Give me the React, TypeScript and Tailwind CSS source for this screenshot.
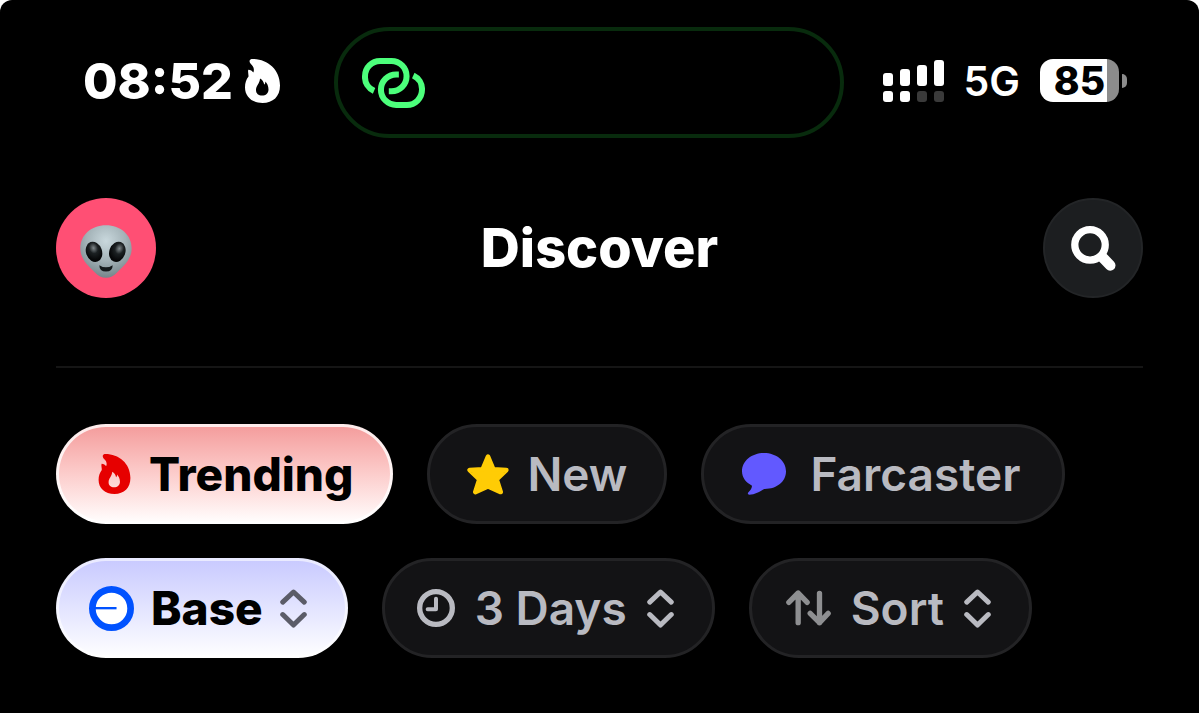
import React from "react";

const BARS = [
  { height: "h-[13px]", foot: "bg-white" },
  { height: "h-[17px]", foot: "bg-white" },
  { height: "h-[21px]", foot: "bg-[#3a3a3a]" },
  { height: "h-[26px]", foot: "bg-[#3a3a3a]" },
];

function FlameIcon({ className }: { className: string }) {
  return (
    <svg viewBox="0 0 35 44" className={className} fill="currentColor" aria-hidden="true">
      <path
        fillRule="evenodd"
        d="M7.5 0C22 0 35 10 35 26.500C35 37.500 28 44 17.500 44C7 44 0 37.500 0 28.500C0 24 1.200 20.500 3.500 17.500C3.700 15.500 2.600 13 3.300 10.800C5.500 10.800 7.400 12 8.200 13.600C9.400 11.500 9 8.500 7.200 6.500C5.500 4.800 4.300 3.500 4.600 1.800C4.800.600 6 0 7.500 0ZM15 19.500C14.800 24.500 11 26.500 11 31C11 34.600 13.600 36.600 17 36.600C20.800 36.600 23.500 34.300 23.500 30.500C23.500 27 22 24.300 20.300 22.500C20.400 24 20 25 19.200 25.600C18.800 23 17.300 20.600 15 19.500Z"
      />
    </svg>
  );
}

function LinkIcon() {
  return (
    <svg
      viewBox="0 0 188 149"
      className="h-[50px] w-[63px] text-[#4cff7b]"
      fill="none"
      stroke="currentColor"
      strokeWidth="18"
      aria-hidden="true"
    >
      <path d="M36 98A45 45 0 0 1 9 54A45 45 0 0 1 54 9H88A45 45 0 0 1 88 99H80" />
      <path d="M110 49H102A45 45 0 0 0 102 140H134A45 45 0 0 0 179 95A45 45 0 0 0 153 52" />
    </svg>
  );
}

function AlienIcon() {
  return (
    <svg viewBox="0 0 156 158" className="mt-[6px] h-[53px] w-[52px]" aria-hidden="true">
      <defs>
        <radialGradient id="skin" cx="0.5" cy="0.3" r="0.7">
          <stop offset="0" stopColor="#c9d8dd" />
          <stop offset="0.55" stopColor="#a3b2b7" />
          <stop offset="1" stopColor="#75858a" />
        </radialGradient>
        <radialGradient id="eye" cx="0.55" cy="0.32" r="0.6">
          <stop offset="0" stopColor="#80888b" />
          <stop offset="0.45" stopColor="#1b2022" />
          <stop offset="1" stopColor="#050607" />
        </radialGradient>
      </defs>
      <path
        fill="url(#skin)"
        d="M78 0C122 0 155 29 155 70C155 100 134 120 112 141C101 153 91 158 78 158C65 158 55 153 44 141C22 120 1 100 1 70C1 29 34 0 78 0Z"
      />
      <ellipse cx="42" cy="80" rx="24" ry="31" transform="rotate(-20 42 80)" fill="url(#eye)" />
      <ellipse cx="112" cy="80" rx="24" ry="31" transform="rotate(20 112 80)" fill="url(#eye)" />
      <path d="M58 120Q78 133 98 120Q98 139 78 139Q58 139 58 120Z" fill="#14191b" />
    </svg>
  );
}

function SearchIcon() {
  return (
    <svg viewBox="0 0 135 136" className="h-[45px] w-[45px]" fill="none" stroke="white" aria-hidden="true">
      <circle cx="57" cy="57" r="46" strokeWidth="22" />
      <path d="M94 94L118 119" strokeWidth="32" strokeLinecap="round" />
    </svg>
  );
}

function StarIcon() {
  return (
    <svg viewBox="0 0 126 123" className="h-[41px] w-[42px]" aria-hidden="true">
      <path
        d="M63 8L79 46L118 48L89 76L101 114L63 97L25 114L37 76L8 48L47 46Z"
        fill="#ffcc05"
        stroke="#ffcc05"
        strokeWidth="14"
        strokeLinejoin="round"
      />
    </svg>
  );
}

function BubbleIcon() {
  return (
    <svg viewBox="0 0 132 126" className="h-[42px] w-[44px]" fill="#6259ff" aria-hidden="true">
      <path d="M66 0C103 0 132 24 132 55C132 87 103 109 66 108C54 116 38 125 22 125C17 125 16 121 20 117C26 111 30 104 30 98C12 89 0 74 0 55C0 24 29 0 66 0Z" />
    </svg>
  );
}

function BaseIcon() {
  return (
    <svg viewBox="0 0 134 134" className="h-[45px] w-[45px]" aria-hidden="true">
      <circle cx="67" cy="67" r="57" fill="white" stroke="#0052ff" strokeWidth="20" />
      <path d="M15 66H82" stroke="#0052ff" strokeWidth="7" />
    </svg>
  );
}

function ClockIcon() {
  return (
    <svg
      viewBox="0 0 114 114"
      className="h-[38px] w-[38px]"
      fill="none"
      stroke="currentColor"
      strokeLinecap="round"
      strokeLinejoin="round"
      aria-hidden="true"
    >
      <circle cx="57" cy="57" r="49" strokeWidth="16" />
      <path d="M57 29V61H32" strokeWidth="12" />
    </svg>
  );
}

function SortIcon() {
  return (
    <svg
      viewBox="0 0 134 108"
      className="h-[36px] w-[45px] text-[#8e8f91]"
      fill="none"
      stroke="currentColor"
      strokeWidth="16"
      strokeLinecap="round"
      strokeLinejoin="round"
      aria-hidden="true"
    >
      <path d="M36 98V10M8 37L36 9L63 37" />
      <path d="M100 10V98M72 70L100 98L126 70" />
    </svg>
  );
}

function Chevrons({ className }: { className?: string }) {
  return (
    <svg
      viewBox="0 0 80 116"
      className={`pointer-events-none h-[39px] w-[27px] ${className ?? ""}`}
      fill="none"
      stroke="currentColor"
      strokeWidth="15"
      strokeLinecap="round"
      strokeLinejoin="round"
      aria-hidden="true"
    >
      <path d="M8 39L40 9L72 39" />
      <path d="M8 76L40 107L72 76" />
    </svg>
  );
}

const PILL = "flex h-[100px] items-center rounded-full border-[3px] bg-origin-border text-[46px] leading-none";
const DARK = "border-[#232325] bg-[#131315] font-semibold text-[#b9bac1]";

type FilterProps = {
  id: string;
  label: string;
  value: string;
  options: string[];
  icon: React.ReactNode;
  className: string;
  chevrons?: string;
};

function FilterSelect({ id, label, value, options, icon, className, chevrons }: FilterProps) {
  return (
    <label htmlFor={id} className={`${PILL} pr-[38px] ${className}`}>
      {icon}
      <select
        id={id}
        aria-label={label}
        defaultValue={value}
        className="field-sizing-content cursor-pointer appearance-none bg-transparent leading-[64px] outline-none"
      >
        {options.map((option) => (
          <option key={option}>{option}</option>
        ))}
      </select>
      <Chevrons className={chevrons} />
    </label>
  );
}

export default function App() {
  return (
    <main className="min-h-screen rounded-t-xl bg-black pt-[27px] font-['Inter',sans-serif] text-white">
      {/* Status bar */}
      <div className="grid grid-cols-[1fr_510px_1fr] items-center pr-[21px]">
        <div className="flex items-center gap-3 pb-1 pl-[83px]">
          <span className="text-[50px] leading-none font-extrabold">08:52</span>
          <FlameIcon className="h-[44px] w-[35px]" />
        </div>
        <div className="flex h-[111px] items-center rounded-full border-4 border-[#082b0d] pl-6">
          <LinkIcon />
        </div>
        <div className="flex items-end justify-end pr-[51px] pb-1">
          <div className="flex items-end gap-[7px]">
            {BARS.map((bar) => (
              <div key={bar.height} className="flex w-[10px] flex-col gap-[5px]">
                <div className={`${bar.height} rounded-[3px] bg-white`} />
                <div className={`h-[11px] rounded-[3px] ${bar.foot}`} />
              </div>
            ))}
          </div>
          <span className="ml-5 text-[41px] leading-none font-semibold">5G</span>
          <div className="ml-5 flex h-[43px] w-[79px] items-center justify-center rounded-[13px] bg-linear-to-r from-white from-85% to-[#8c8c8c] to-85%">
            <span className="text-[39px] leading-none font-extrabold text-black">85</span>
          </div>
          <div className="ml-[3px] h-[14px] w-[5px] self-center rounded-r-full bg-[#8c8c8c]" />
        </div>
      </div>

      <div className="px-14">
        {/* Header */}
        <header className="mt-[60px] flex items-center justify-between border-b-2 border-[#151515] pb-[68px]">
          <button
            type="button"
            aria-label="Profile"
            className="flex h-[100px] w-[100px] items-center justify-center rounded-full bg-[#ff4f74]"
          >
            <AlienIcon />
          </button>
          <h1 className="text-[54px] leading-none font-extrabold">Discover</h1>
          <button
            type="button"
            aria-label="Search"
            className="flex h-[100px] w-[100px] items-center justify-center rounded-full border-2 border-[#232527] bg-[#1c1e20]"
          >
            <SearchIcon />
          </button>
        </header>

        {/* Filters */}
        <div className="mt-14 flex flex-col gap-[34px]">
          <div className="flex gap-[34px]">
            <button
              type="button"
              className={`${PILL} gap-[18px] border-white/80 bg-linear-to-b from-[#f39a9a] to-white pr-[37px] pl-[39px] font-extrabold text-black`}
            >
              <FlameIcon className="h-[40px] w-[33px] text-[#e60000]" />
              Trending
            </button>
            <button type="button" className={`${PILL} ${DARK} gap-[18px] px-[37px]`}>
              <StarIcon />
              New
            </button>
            <button type="button" className={`${PILL} ${DARK} gap-6 pr-[42px] pl-[38px]`}>
              <BubbleIcon />
              Farcaster
            </button>
          </div>
          <div className="flex gap-[34px]">
            <FilterSelect
              id="chain"
              label="Chain"
              value="Base"
              options={["Base"]}
              icon={<BaseIcon />}
              className="gap-[17px] border-white/60 bg-linear-to-b from-[#c8c9ff] to-white pl-[30px] font-extrabold text-black"
              chevrons="text-[#5b5c68]"
            />
            <FilterSelect
              id="period"
              label="Period"
              value="3 Days"
              options={["3 Days"]}
              icon={<ClockIcon />}
              className={`${DARK} gap-5 pl-8`}
            />
            <FilterSelect
              id="sort"
              label="Sort"
              value="Sort"
              options={["Sort"]}
              icon={<SortIcon />}
              className={`${DARK} gap-5 pl-[34px]`}
            />
          </div>
        </div>
      </div>
    </main>
  );
}
